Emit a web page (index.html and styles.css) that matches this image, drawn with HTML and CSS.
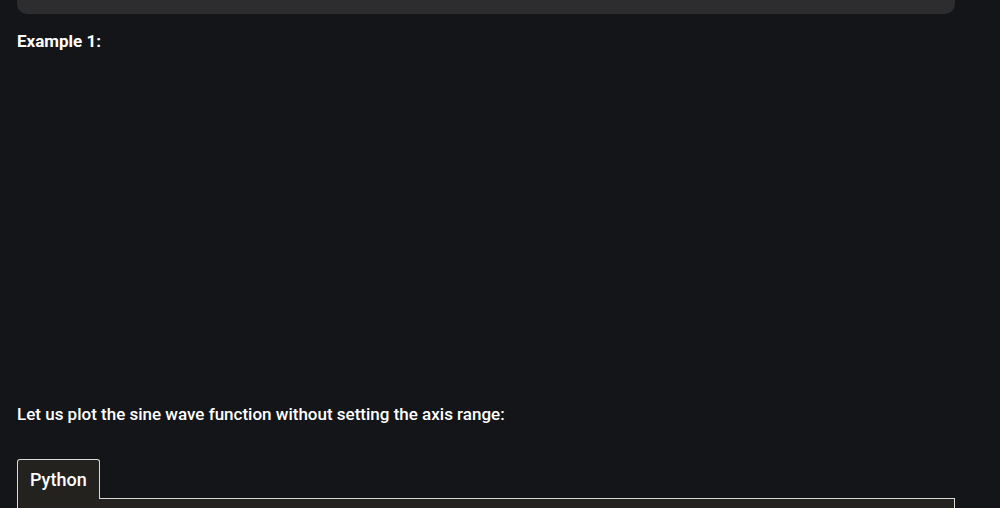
FILE: index.html
```html
<!DOCTYPE html>
<html>
<head>
<meta charset="utf-8">
<link rel="stylesheet" href="styles.css">
</head>
<body>
<div class="page">
  <div class="prev-box"></div>
  <p class="heading">Example 1:</p>
  <div class="figure"></div>
  <p class="text">Let us plot the sine wave function without setting the axis range:</p>
  <div class="tabs">
    <div class="tab">Python</div>
    <div class="tab-line"></div>
  </div>
  <div class="code"></div>
</div>
</body>
</html>
```
FILE: styles.css
```css
html, body {
  margin: 0;
  padding: 0;
  background: #141519;
  height: 100%;
  overflow: hidden;
}
.page {
  width: 938px;
  margin-left: 17px;
  font-family: Roboto, "Liberation Sans", sans-serif;
  color: #ffffff;
}
.prev-box {
  height: 14px;
  background: #2d2d2f;
  border-radius: 0 0 10px 10px;
}
.heading {
  margin: 17px 0 0 0;
  font-size: 17px;
  font-weight: 700;
  line-height: 20px;
}
.figure {
  height: 353px;
}
.text {
  margin: 0;
  font-size: 17px;
  font-weight: 500;
  line-height: 20px;
}
.tabs {
  display: flex;
  align-items: flex-end;
  margin-top: 35px;
}
.tab {
  padding: 0 12px;
  height: 39px;
  line-height: 40px;
  font-size: 18px;
  font-weight: 500;
  background: #23221f;
  border: 1px solid #d9d9d9;
  border-bottom: none;
  border-radius: 3px 3px 0 0;
}
.tab-line {
  flex: 1;
  border-bottom: 1px solid #d9d9d9;
}
.code {
  height: 40px;
  background: #23221f;
  border-left: 1px solid #d9d9d9;
  border-right: 1px solid #d9d9d9;
}
```
